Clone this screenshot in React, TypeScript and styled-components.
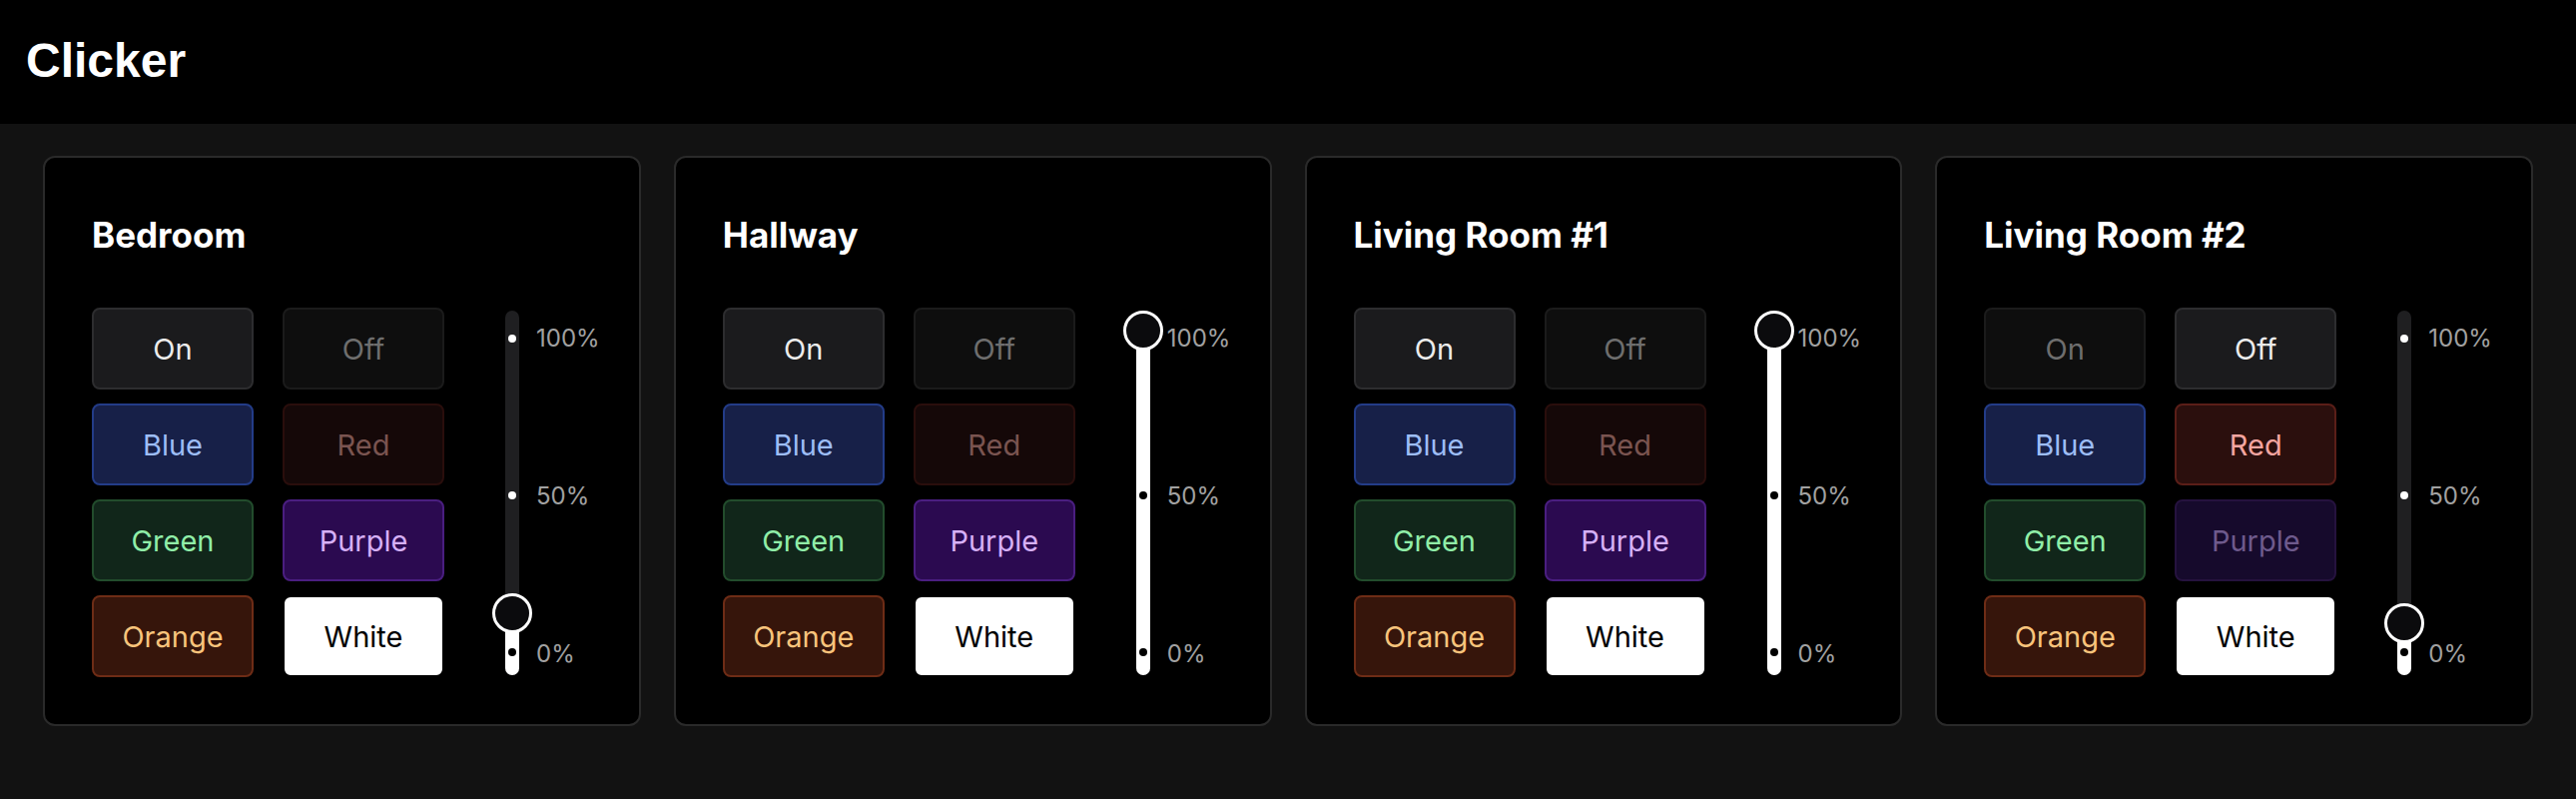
import React from "react";
import styled, { createGlobalStyle } from "styled-components";

const GlobalStyle = createGlobalStyle`
  html, body {
    margin: 0;
    padding: 0;
    background: #121212;
  }
  * {
    box-sizing: border-box;
  }
`;

const Page = styled.div`
  min-height: 100vh;
  background: #121212;
  font-family: Inter, "Noto Sans", sans-serif;
`;

const Header = styled.header`
  height: 124px;
  background: #000;
  display: flex;
  align-items: center;
  padding: 0 0 4px 26px;
  h1 {
    margin: 0;
    font-family: "Liberation Sans", Arial, sans-serif;
    font-size: 48px;
    font-weight: 700;
    color: #fff;
  }
`;

const Grid = styled.main`
  display: grid;
  grid-template-columns: repeat(4, minmax(0, 1fr));
  gap: 33px;
  padding: 32px 43px;
`;

const Card = styled.section`
  background: #000;
  border: 2px solid #2a2a2a;
  border-radius: 12px;
  padding: 47px 30px 47px 47px;
`;

const Title = styled.h2`
  margin: 10px 0 53px;
  font-size: 35px;
  line-height: 40px;
  font-weight: 700;
  color: #fff;
`;

const Controls = styled.div`
  display: flex;
  align-items: stretch;
`;

const Buttons = styled.div`
  display: grid;
  grid-template-columns: 162px 162px;
  grid-auto-rows: 82px;
  column-gap: 29px;
  row-gap: 14px;
`;

type Tone = "neutral" | "blue" | "red" | "green" | "purple" | "orange" | "white";

// [background, border, text]
const tones: Record<Tone, { on: string[]; off: string[] }> = {
  neutral: { on: ["#1b1b1d", "#2d2d2f", "#ececec"], off: ["#0e0e0e", "#1b1b1b", "#6e6e6e"] },
  blue: { on: ["#172048", "#233c88", "#9dbdf6"], off: ["#0d1128", "#141f45", "#4f6190"] },
  red: { on: ["#2b0f0d", "#5a1e18", "#f4a5a0"], off: ["#150808", "#2a0e0c", "#7a5450"] },
  green: { on: ["#11261a", "#224c2c", "#90eea8"], off: ["#09140d", "#132817", "#4d7a58"] },
  purple: { on: ["#2b0a50", "#4a1e80", "#d6b0f7"], off: ["#160a2c", "#25123e", "#6e5a8c"] },
  orange: { on: ["#36150b", "#6e2c16", "#f8c47c"], off: ["#1b0b06", "#38160b", "#7e6441"] },
  white: { on: ["#ffffff", "#000000", "#000000"], off: ["#8a8a8a", "#000000", "#222222"] },
};

const LightButton = styled.button<{ $tone: Tone; $dim?: boolean }>`
  display: flex;
  align-items: center;
  justify-content: center;
  border-radius: 8px;
  font-family: inherit;
  font-size: 29px;
  font-weight: 400;
  cursor: pointer;
  background: ${(p) => tones[p.$tone][p.$dim ? "off" : "on"][0]};
  border: 2px solid ${(p) => tones[p.$tone][p.$dim ? "off" : "on"][1]};
  color: ${(p) => tones[p.$tone][p.$dim ? "off" : "on"][2]};
`;

const Slider = styled.div`
  display: flex;
  gap: 17px;
  margin: 3px 0 2px 61px;
`;

const Track = styled.div`
  position: relative;
  width: 14px;
  flex-shrink: 0;
  border-radius: 7px;
  background: #1f1f21;
`;

const Fill = styled.div`
  position: absolute;
  left: 0;
  right: 0;
  bottom: 0;
  background: #fff;
  border-radius: 7px;
`;

const Ticks = styled.div`
  position: relative;
  height: 100%;
  display: flex;
  flex-direction: column;
  justify-content: space-between;
  align-items: center;
  padding: 24px 0 19px;
`;

const Tick = styled.span<{ $covered: boolean }>`
  width: 8px;
  height: 8px;
  border-radius: 50%;
  background: ${(p) => (p.$covered ? "#000" : "#fff")};
`;

const Thumb = styled.div`
  position: absolute;
  left: 50%;
  width: 40px;
  height: 40px;
  margin-left: -20px;
  border-radius: 50%;
  border: 3px solid #fff;
  background: #0b0b0d;
`;

const Labels = styled.div`
  display: flex;
  flex-direction: column;
  justify-content: space-between;
  padding: 13px 0 7px;
  font-size: 24px;
  line-height: 29px;
  color: #a1a1a1;
  white-space: nowrap;
`;

interface Room {
  name: string;
  power: boolean;
  red: boolean;
  purple: boolean;
  level: number;
}

const rooms: Room[] = [
  { name: "Bedroom", power: true, red: false, purple: true, level: 0.13 },
  { name: "Hallway", power: true, red: false, purple: true, level: 1 },
  { name: "Living Room #1", power: true, red: false, purple: true, level: 1 },
  { name: "Living Room #2", power: false, red: true, purple: false, level: 0.1 },
];

// track is 366px tall, ticks sit 23px + t*315px from its bottom
const TRACK = 366;

function Brightness({ level }: { level: number }) {
  const filled = 20 + level * (TRACK - 40);
  return (
    <Slider>
      <Track>
        <Fill style={{ height: `calc(20px + ${level} * (100% - 40px))` }} />
        <Ticks>
          {[1, 0.5, 0].map((t) => (
            <Tick key={t} $covered={23 + t * 315 < filled} />
          ))}
        </Ticks>
        <Thumb style={{ bottom: `calc(${level} * (100% - 40px))` }} />
      </Track>
      <Labels>
        <span>100%</span>
        <span>50%</span>
        <span>0%</span>
      </Labels>
    </Slider>
  );
}

function RoomCard({ room }: { room: Room }) {
  return (
    <Card>
      <Title>{room.name}</Title>
      <Controls>
        <Buttons>
          <LightButton $tone="neutral" $dim={!room.power}>On</LightButton>
          <LightButton $tone="neutral" $dim={room.power}>Off</LightButton>
          <LightButton $tone="blue">Blue</LightButton>
          <LightButton $tone="red" $dim={!room.red}>Red</LightButton>
          <LightButton $tone="green">Green</LightButton>
          <LightButton $tone="purple" $dim={!room.purple}>Purple</LightButton>
          <LightButton $tone="orange">Orange</LightButton>
          <LightButton $tone="white">White</LightButton>
        </Buttons>
        <Brightness level={room.level} />
      </Controls>
    </Card>
  );
}

export default function App() {
  return (
    <Page>
      <GlobalStyle />
      <Header>
        <h1>Clicker</h1>
      </Header>
      <Grid>
        {rooms.map((room) => (
          <RoomCard key={room.name} room={room} />
        ))}
      </Grid>
    </Page>
  );
}
